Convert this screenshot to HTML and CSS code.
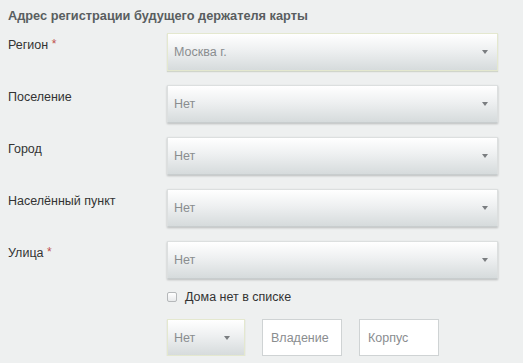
FILE: index.html
```html
<!DOCTYPE html>
<html lang="ru">
<head>
<meta charset="utf-8">
<link rel="stylesheet" href="styles.css">
</head>
<body>
<div class="page">
  <h2 class="title">Адрес регистрации будущего держателя карты</h2>
  <div class="form">
    <div class="label">Регион <span class="req">*</span></div>
    <div class="select active"><span>Москва г.</span><i class="arrow"></i></div>

    <div class="label">Поселение</div>
    <div class="select"><span>Нет</span><i class="arrow"></i></div>

    <div class="label">Город</div>
    <div class="select"><span>Нет</span><i class="arrow"></i></div>

    <div class="label">Населённый пункт</div>
    <div class="select"><span>Нет</span><i class="arrow"></i></div>

    <div class="label">Улица <span class="req">*</span></div>
    <div class="field-group">
      <div class="select"><span>Нет</span><i class="arrow"></i></div>
      <label class="check"><span class="box"></span>Дома нет в списке</label>
      <div class="house-row">
        <div class="select small active"><span>Нет</span><i class="arrow"></i></div>
        <div class="input">Владение</div>
        <div class="input">Корпус</div>
      </div>
    </div>
  </div>
</div>
</body>
</html>
```

FILE: styles.css
```css
html, body {
  margin: 0;
  padding: 0;
  background: #eef0f0;
}
body {
  font-family: "Liberation Sans", Arial, sans-serif;
  font-size: 12.5px;
  color: #333;
}
.page {
  padding: 8px 0 0 8px;
}
.title {
  margin: 0;
  font-size: 12.75px;
  line-height: 16px;
  font-weight: bold;
  color: #595e60;
}
.form {
  margin-top: 9px;
  display: grid;
  grid-template-columns: 159px 331px;
  row-gap: 14px;
  align-items: start;
}
.label {
  padding-top: 4px;
  line-height: 16px;
  color: #333;
}
.req {
  color: #c0504d;
  font-size: 12px;
  position: relative;
  top: -1px;
}
.select {
  height: 38px;
  box-sizing: border-box;
  border: 1px solid #dcdfdf;
  border-bottom-color: #c8cdce;
  background: linear-gradient(#ffffff 0%, #eef0f1 45%, #d6dbdc 100%);
  box-shadow: 0 1px 2px rgba(0,0,0,0.22);
  display: flex;
  align-items: center;
  justify-content: space-between;
  padding: 0 9px 0 6px;
  color: #8a8d8f;
}
.select.active {
  border-color: #e4e8cf;
  box-shadow: 0 1px 1px rgba(120,130,90,0.25);
}
.arrow {
  width: 0;
  height: 0;
  border-left: 3.5px solid transparent;
  border-right: 3.5px solid transparent;
  border-top: 4px solid #7a7d80;
}
.field-group {
  display: flex;
  flex-direction: column;
}
.check {
  display: flex;
  align-items: center;
  height: 16px;
  margin-top: 10px;
  color: #333;
}
.box {
  width: 8px;
  height: 8px;
  border: 1px solid #b5b8ba;
  border-radius: 2px;
  background: linear-gradient(#ffffff, #e8eaeb);
  margin-right: 8px;
}
.house-row {
  display: flex;
  gap: 17px;
  margin-top: 14px;
}
.select.small {
  width: 78px;
  height: 37px;
  padding-right: 14px;
  flex: none;
}
.input {
  width: 80px;
  height: 37px;
  box-sizing: border-box;
  border: 1px solid #cfd3d4;
  background: #fff;
  display: flex;
  align-items: center;
  padding-left: 8px;
  color: #8a8d8f;
}
```
